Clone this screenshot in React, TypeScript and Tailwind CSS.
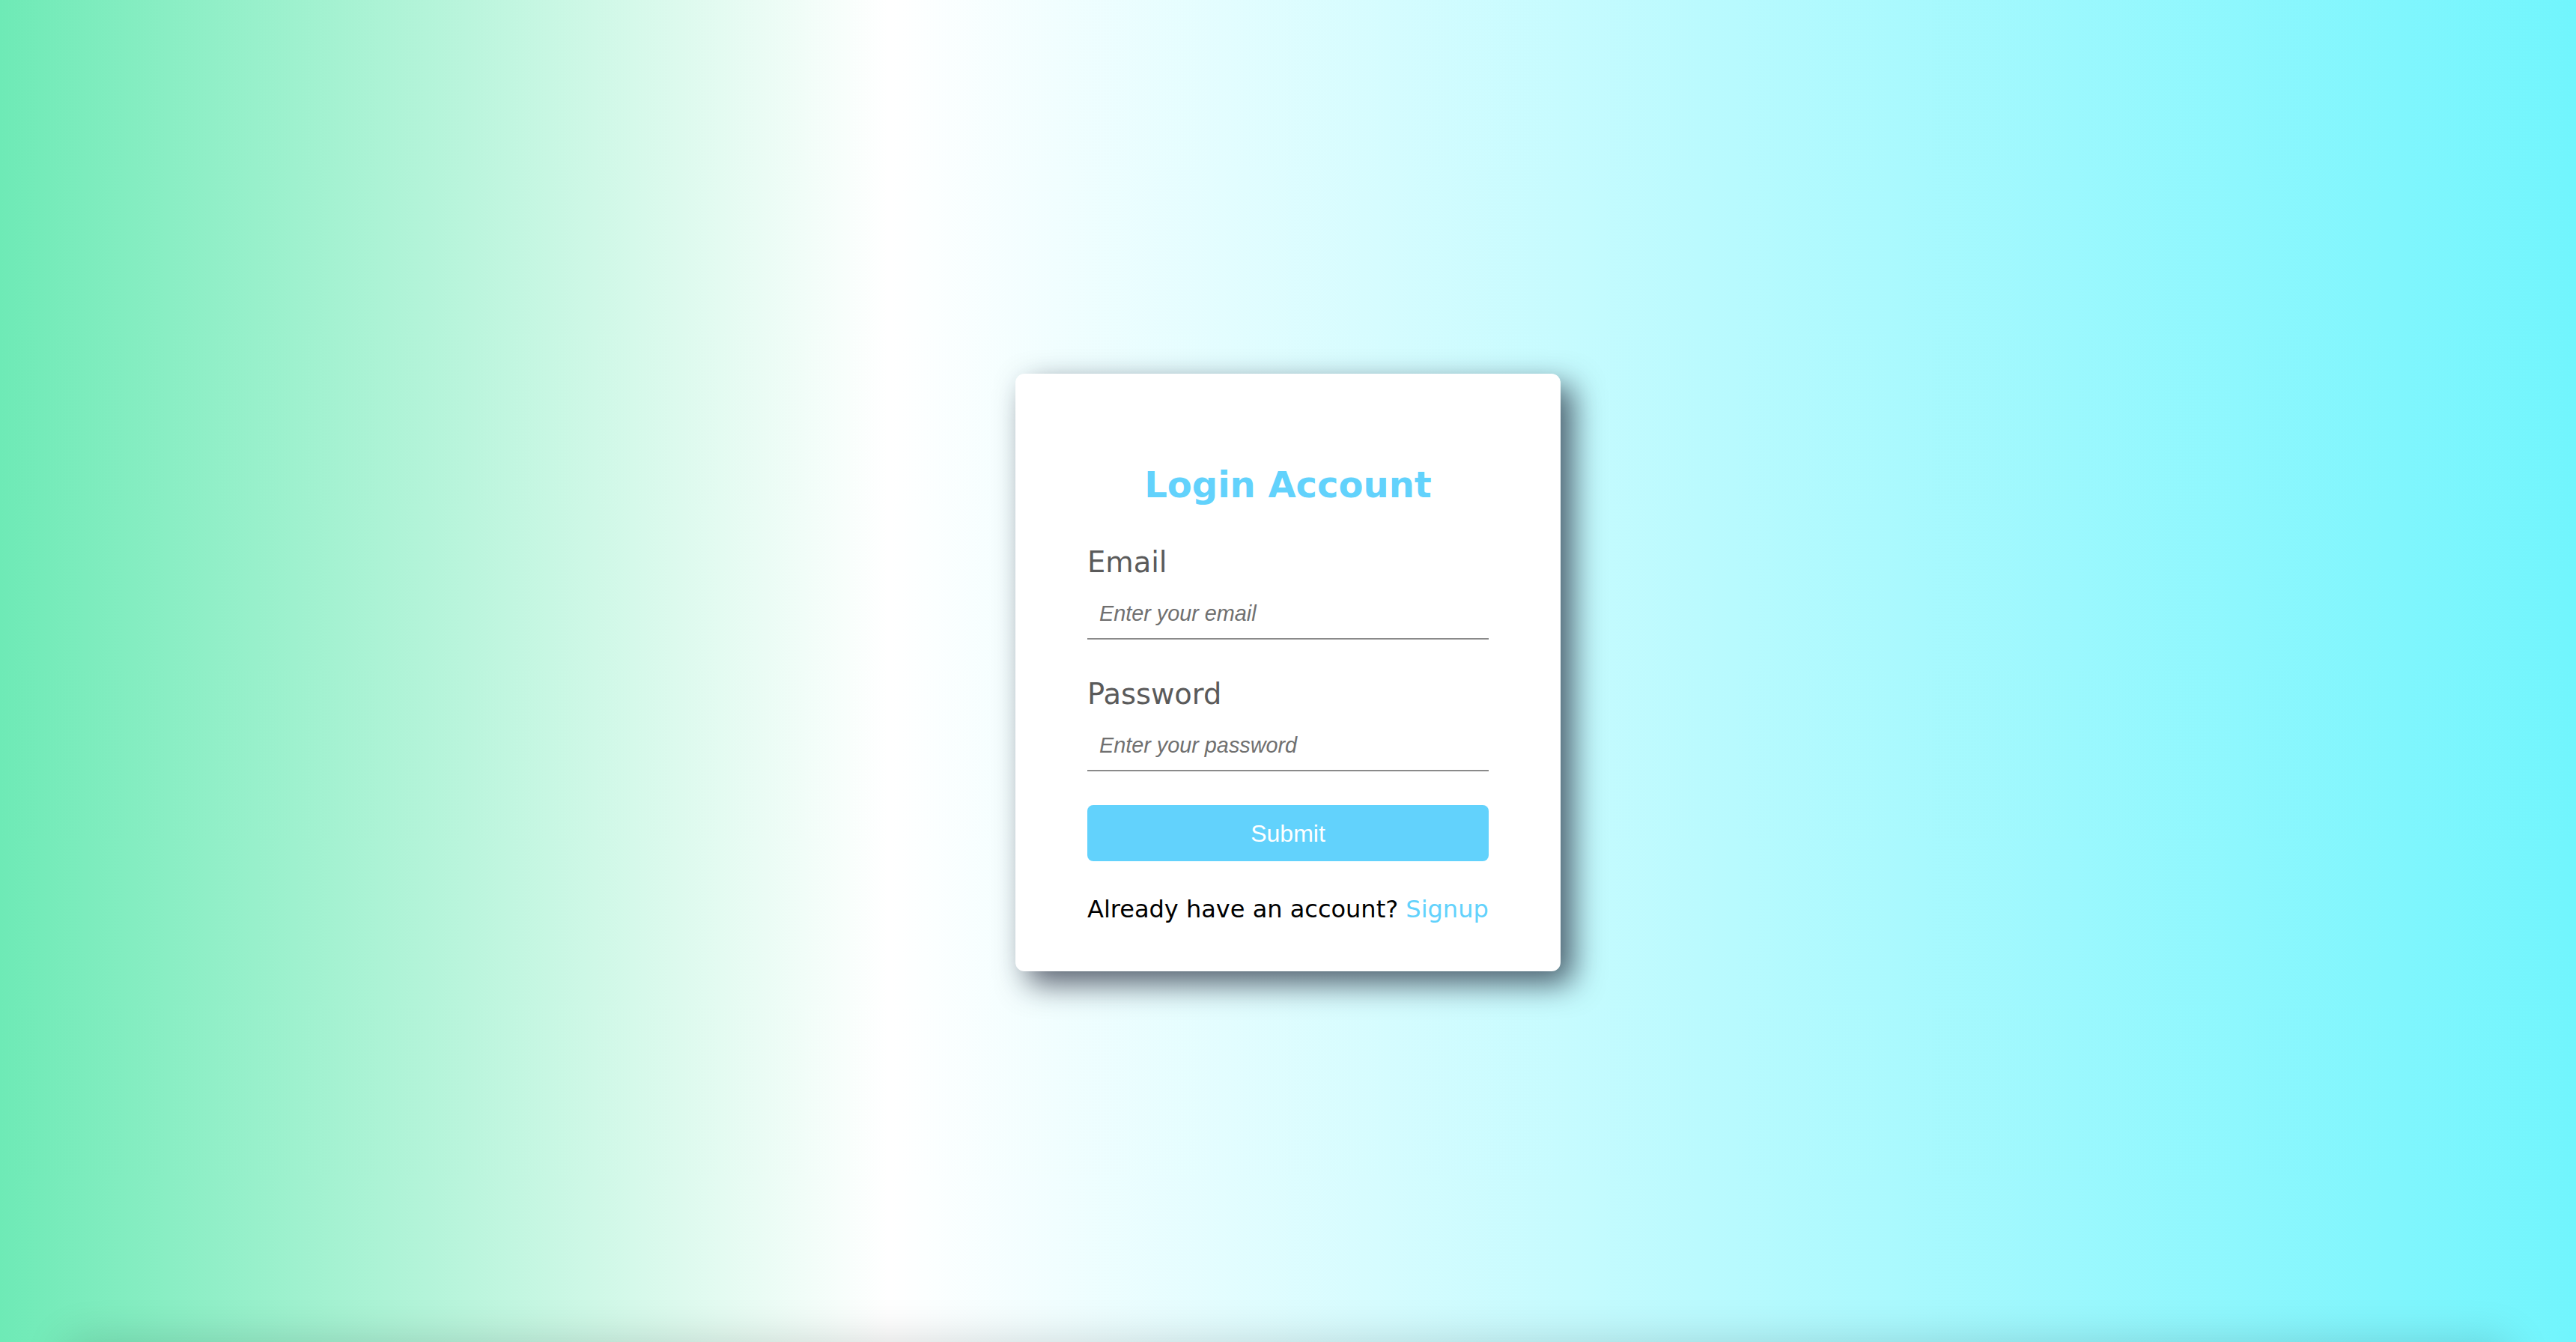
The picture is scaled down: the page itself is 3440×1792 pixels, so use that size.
const Field = ({ label, type, placeholder, top }: { label: string; type: string; placeholder: string; top: string }) => {
  return (
    <div className={`flex flex-col ${top}`}>
      <label className="text-[38.4px] leading-[45px] text-[#5a5a5a]">{label}</label>
      <input
        type={type}
        placeholder={placeholder}
        className="mt-[13px] h-[68px] w-full border-b-2 border-[#8a8a8a] bg-transparent pl-4 font-['Liberation_Sans',Arial,sans-serif] text-[28.8px] italic text-[#333] outline-none placeholder:text-[#707070]"
      />
    </div>
  );
};

const App = () => {
  return (
    <div className="flex h-screen flex-col overflow-hidden bg-[linear-gradient(to_right,#6eeab6,#ffffff_34.5%,#71f5fd)] font-['DejaVu_Sans',Verdana,sans-serif]">
      <main className="flex h-screen shrink-0 items-center justify-center pt-1">
        <form className="flex w-[728px] flex-col rounded-xl bg-white px-[96px] pt-[120px] pb-[64px] shadow-[16px_16px_40px_rgba(20,25,45,0.7)]">
          <h1 className="text-center text-[48px] font-bold leading-[56px] text-[#62d2fc]">Login Account</h1>

          <Field label="Email" type="email" placeholder="Enter your email" top="mt-[53px]" />
          <Field label="Password" type="password" placeholder="Enter your password" top="mt-[50px]" />

          <button
            type="button"
            className="mt-[45px] h-[75px] w-full rounded-lg bg-[#62d2fc] font-['Liberation_Sans',Arial,sans-serif] text-[32px] text-white"
          >
            Submit
          </button>

          <p className="mt-[46px] whitespace-nowrap text-[32px] leading-[37px] text-black">
            Already have an account? <a className="text-[#62d2fc]">Signup</a>
          </p>
        </form>
      </main>
      {/* soft shadow peeking in from below the fold */}
      <div className="mx-[90px] h-[100px] shrink-0 shadow-[0_0_60px_rgba(0,0,0,0.16)]" />
    </div>
  );
};

export default App;
